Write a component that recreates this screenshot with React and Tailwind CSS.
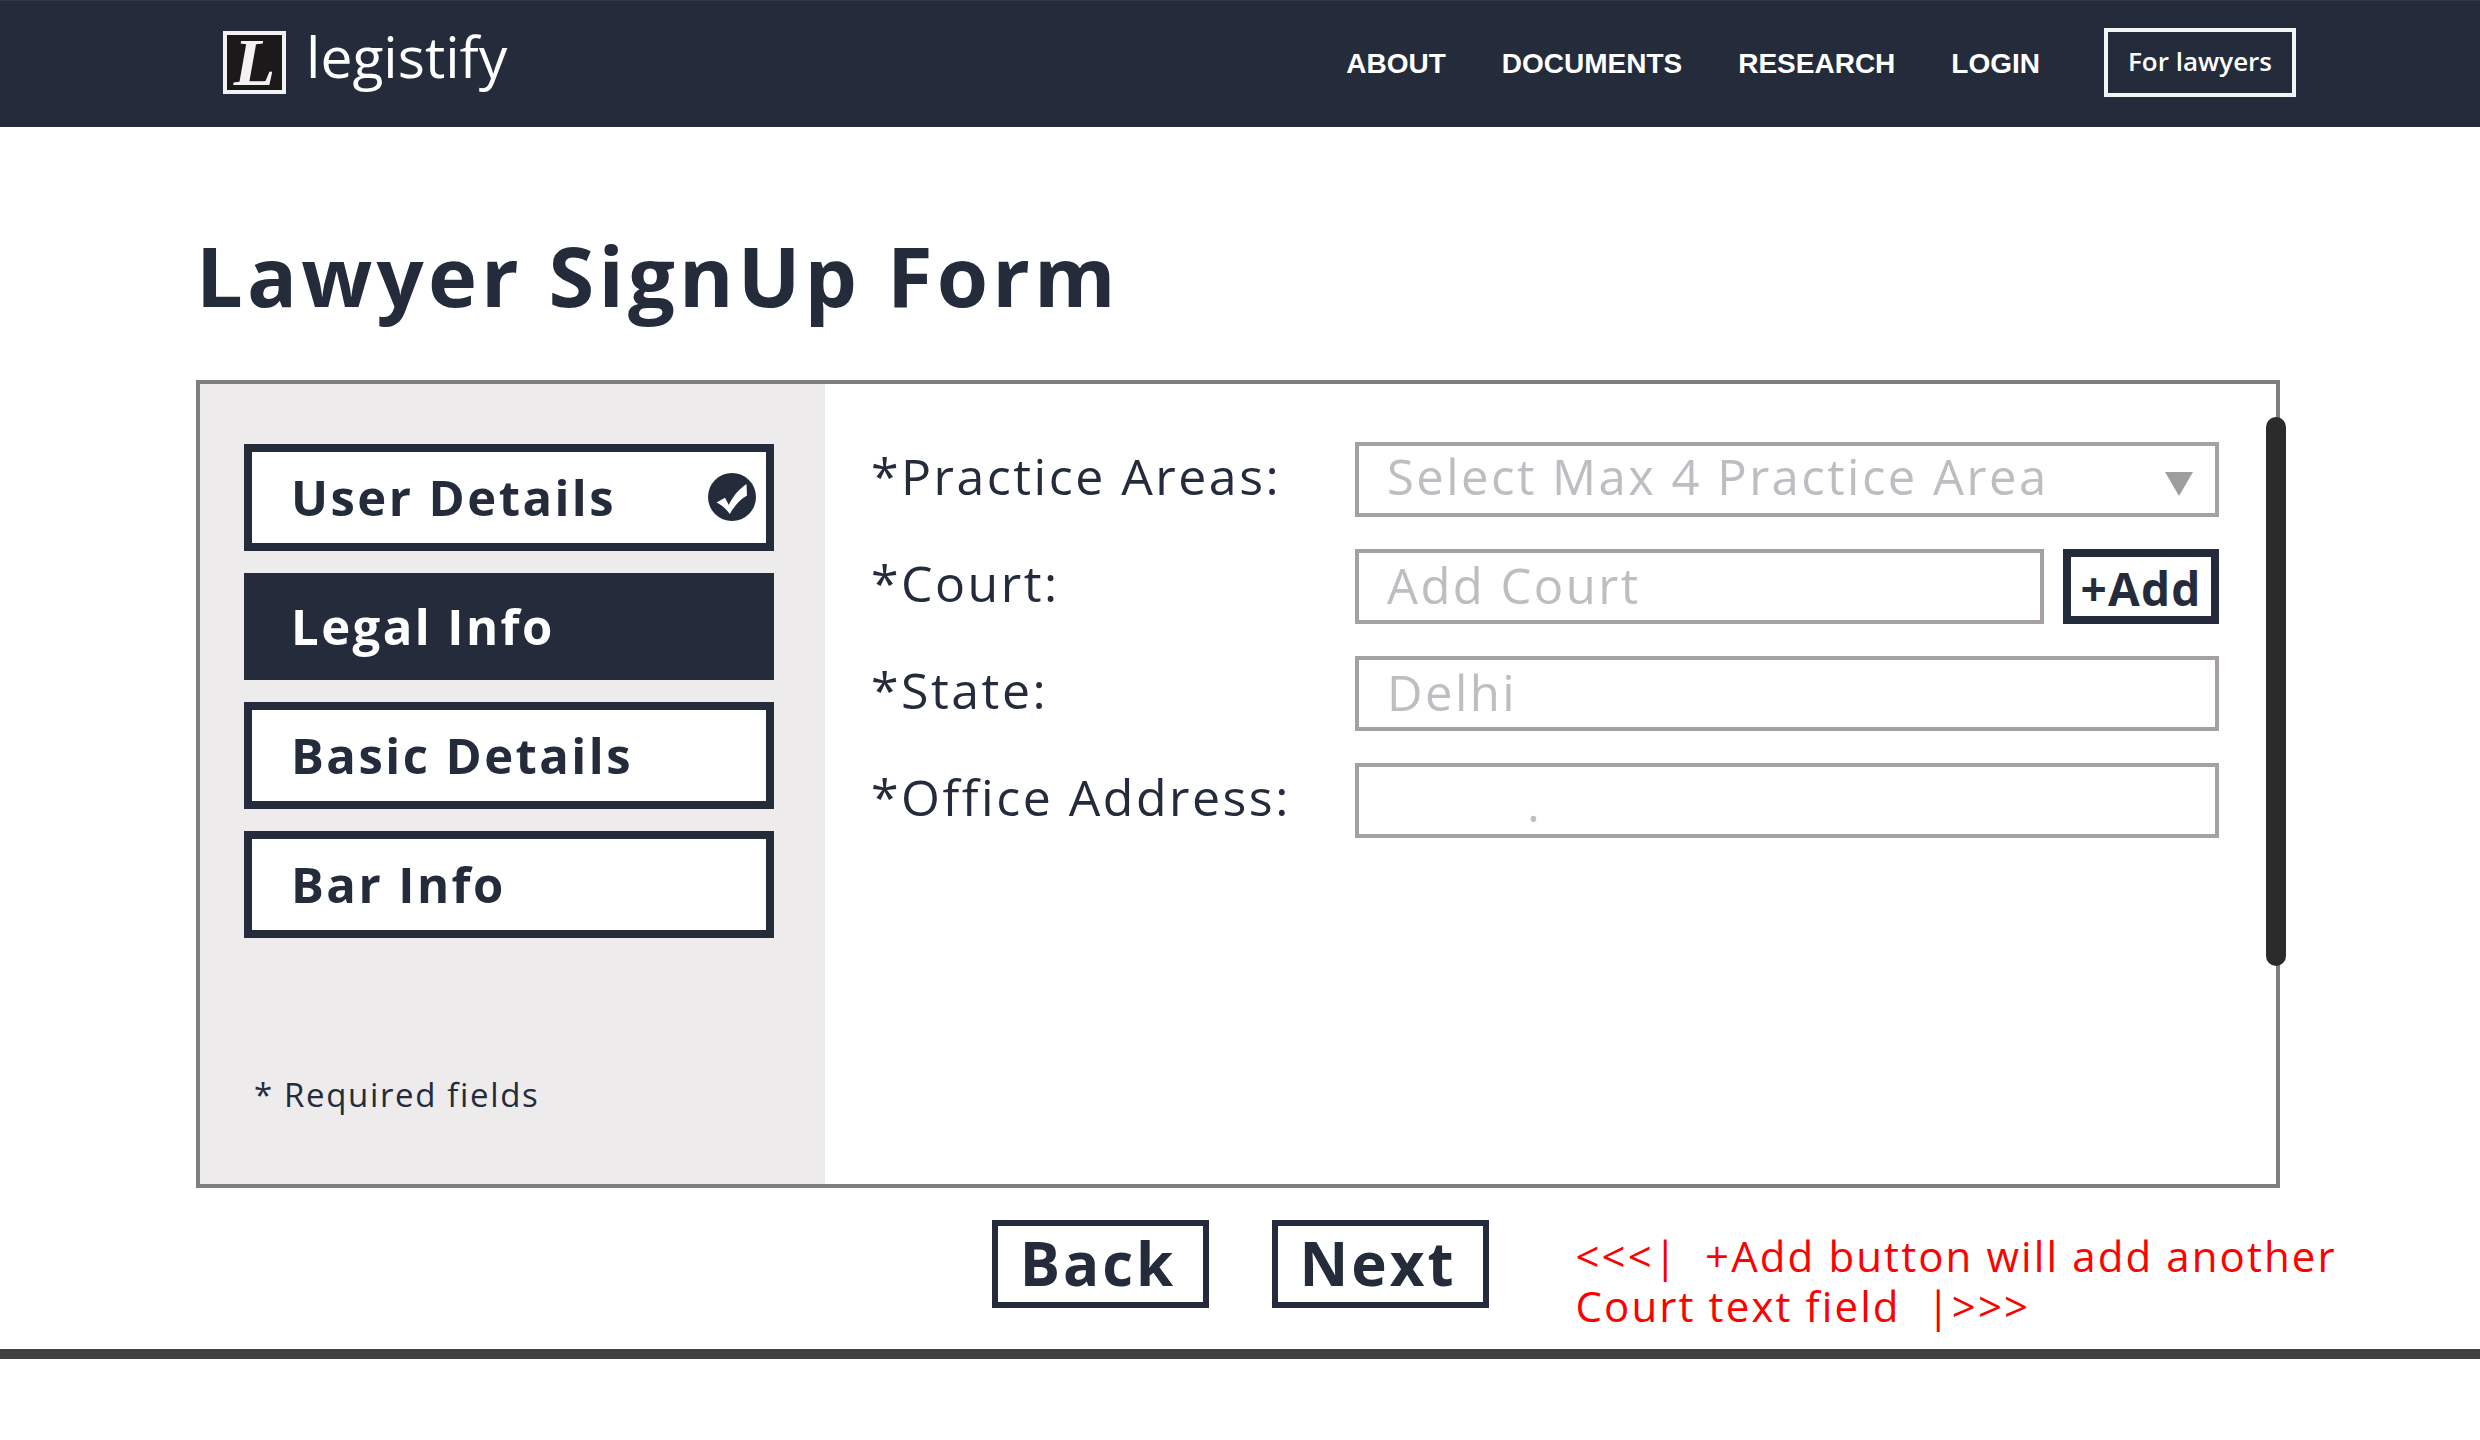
import React from "react";

const links = ["ABOUT", "DOCUMENTS", "RESEARCH", "LOGIN"];

const steps = [
  { name: "User Details", done: true },
  { name: "Legal Info", current: true },
  { name: "Basic Details" },
  { name: "Bar Info" },
];

const fieldClass =
  "h-[75px] w-full min-w-0 appearance-none rounded-none border-4 border-[#a5a1a2] bg-white pl-7 text-[49px] leading-[60px] tracking-wider text-[#bcbec2] placeholder:text-[#bcbec2] placeholder:opacity-100 outline-none";

function Header() {
  return (
    <header className="flex h-[127px] items-center justify-between border-t border-[#2f3848] bg-[#242c3c] pb-1 pl-[223px] pr-[184px] text-white">
      <a href="#home" className="flex items-center gap-5">
        <span className="flex size-[63px] items-center justify-center border-4 border-[#f3f1f2] bg-[#1b191a] font-['Liberation_Serif',serif] text-[68px] leading-none font-bold italic text-[#f3f1f2]">
          L
        </span>
        <span className="pb-3 text-[57px] leading-[78px]">legistify</span>
      </a>
      <nav className="flex items-center gap-14 font-['Liberation_Sans',sans-serif] text-[28px] font-bold">
        {links.map((link) => (
          <a key={link} href={"#" + link.toLowerCase()} className="pt-1">
            {link}
          </a>
        ))}
        <button
          type="button"
          className="ml-2 h-[69px] w-[192px] border-4 border-[#f3f4f6] pb-[2px] font-['Open_Sans',sans-serif] text-[26px] font-semibold"
        >
          For lawyers
        </button>
      </nav>
    </header>
  );
}

function CheckBadge() {
  return (
    <svg viewBox="0 0 48 48" className="size-12" aria-hidden="true">
      <circle cx="24" cy="24" r="24" fill="#242c3c" />
      <path
        d="M8.5 29.5 L17 24.8 L20.8 32 C25 23 31 16 38.5 11 L39 22.5 C32 26.5 27 32 21.8 41 C18 36 14 32 8.5 29.5 Z"
        fill="#fff"
      />
    </svg>
  );
}

function Step({ name, done, current }) {
  return (
    <button
      type="button"
      aria-current={current ? "step" : undefined}
      className={
        "flex h-[107px] w-full items-center justify-between border-8 border-[#242c3c] pb-[2px] pl-[39px] pr-[10px] text-left text-[49px] leading-[66px] font-bold tracking-wider " +
        (current ? "bg-[#242c3c] text-white" : "bg-white")
      }
    >
      {name}
      {done && <CheckBadge />}
    </button>
  );
}

function Row({ id, label, children }) {
  return (
    <div className="grid grid-cols-[484px_1fr] items-center">
      <label htmlFor={id} className="pb-2 text-[50px] leading-[60px] tracking-wider">
        {label}
      </label>
      {children}
    </div>
  );
}

function StepButton({ children }) {
  return (
    <button
      type="button"
      className="h-[88px] w-[217px] border-[6px] border-[#242c3c] pr-1 pb-[2px] text-[60px] leading-[72px] font-bold tracking-wider"
    >
      {children}
    </button>
  );
}

export default function App() {
  return (
    <div className="bg-white font-['Open_Sans',sans-serif] text-[#242c3c]">
      <Header />
      <main className="border-b-[10px] border-[#414141] pb-[18px]">
        <h1 className="px-[196px] pt-[91px] text-[83px] leading-[114px] font-bold tracking-wider">
          Lawyer SignUp Form
        </h1>

        <section className="relative mt-12 mr-[200px] ml-[196px] flex border-4 border-[#7f7f7f]">
          <aside className="w-[625px] shrink-0 bg-[#edebec] pt-[60px] pr-[51px] pb-[66px] pl-11">
            <nav className="flex flex-col gap-[22px]">
              {steps.map((s) => (
                <Step key={s.name} {...s} />
              ))}
            </nav>
            <p className="mt-[133px] pl-[10px] text-[33px] leading-[47px] tracking-wider">
              * Required fields
            </p>
          </aside>

          <form className="flex flex-1 flex-col gap-8 pt-[58px] pr-[57px] pl-[46px]">
            <Row id="areas" label="*Practice Areas:">
              <div className="relative">
                <select id="areas" className={fieldClass + " pb-2"}>
                  <option>Select Max 4 Practice Area</option>
                </select>
                <svg
                  viewBox="0 0 28 24"
                  className="pointer-events-none absolute top-[30px] right-[26px] h-6 w-7"
                  aria-hidden="true"
                >
                  <path d="M0 0 H28 L14 24 Z" fill="#9e9e9e" />
                </svg>
              </div>
            </Row>
            <Row id="court" label="*Court:">
              <div className="flex gap-[19px]">
                <input
                  id="court"
                  type="text"
                  placeholder="Add Court"
                  className={fieldClass + " pb-1"}
                />
                <button
                  type="button"
                  className="h-[75px] w-[156px] shrink-0 border-8 border-[#242c3c] pt-1 text-[46px] leading-[55px] font-bold tracking-wide"
                >
                  +Add
                </button>
              </div>
            </Row>
            <Row id="state" label="*State:">
              <input
                id="state"
                type="text"
                placeholder="Delhi"
                className={fieldClass + " pb-1"}
              />
            </Row>
            <Row id="address" label="*Office Address:">
              <input
                id="address"
                type="text"
                placeholder="."
                className={fieldClass + " pt-1 indent-[140px]"}
              />
            </Row>
          </form>

          <div className="absolute top-[33px] -right-[10px] h-[549px] w-5 rounded-full bg-[#2b2b2b]" />
        </section>

        <div className="mt-8 grid grid-cols-[1fr_auto_1fr] items-start">
          <div className="col-start-2 flex gap-[63px]">
            <StepButton>Back</StepButton>
            <StepButton>Next</StepButton>
          </div>
          <p className="mt-[11px] ml-[87px] text-[42px] leading-[50px] tracking-wider whitespace-pre text-[#ff0000]">
            {"<<<|  +Add button will add another\nCourt text field  |>>>"}
          </p>
        </div>
      </main>
    </div>
  );
}
